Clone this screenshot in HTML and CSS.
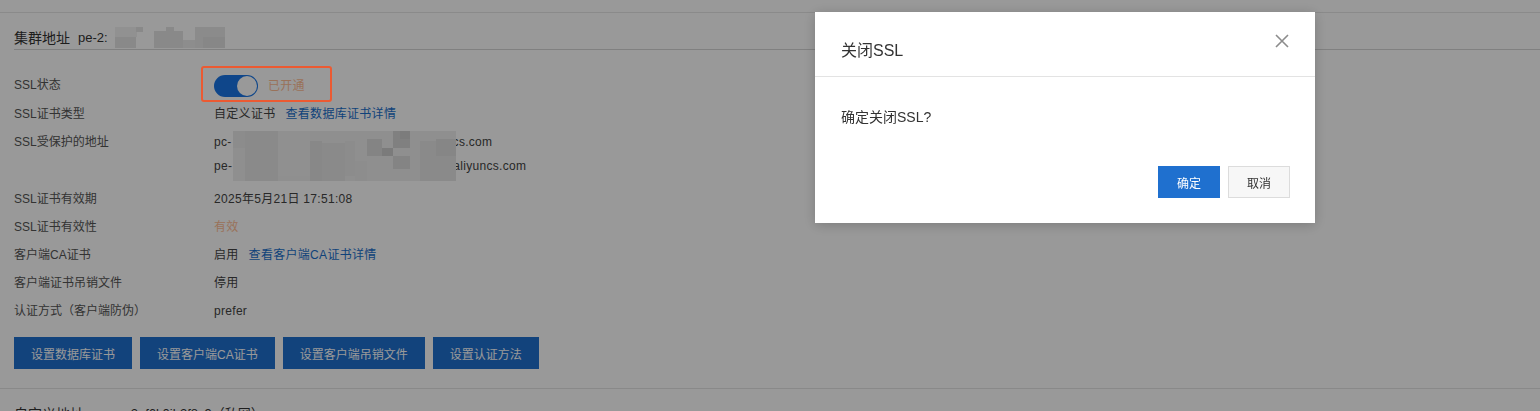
FILE: index.html
```html
<!DOCTYPE html>
<html lang="zh-CN">
<head>
  <meta charset="UTF-8" />
  <title>SSL设置</title>
  <link rel="stylesheet" href="styles.css">
</head>
<body>

  <div class="topbar"></div>

  <!-- 集群地址 -->
  <section class="cluster">
    <div class="section-head">
      <span class="section-title">集群地址</span>
      <span class="section-sub">pe-2:</span>
      <svg class="mosaic-head" width="110" height="21" viewBox="115 27 110 21">
        <rect x="115" y="27" width="22" height="10" fill="#f2f2f2"/>
        <rect x="115" y="37" width="21" height="11" fill="#e4e4e4"/>
        <rect x="136" y="27" width="7" height="5" fill="#e4e4e4"/>
        <rect x="154" y="31" width="29" height="17" fill="#e4e4e4"/>
        <rect x="166" y="27" width="8" height="5" fill="#e4e4e4"/>
        <rect x="183" y="40" width="12" height="8" fill="#ececec"/>
        <rect x="195" y="27" width="30" height="21" fill="#e8e8e8"/>
        <rect x="203" y="37" width="22" height="11" fill="#e1e1e1"/>
      </svg>
    </div>

    <div class="info">
      <div class="row row-switch">
        <div class="label">SSL状态</div>
        <div class="value">
          <span class="switch-wrap">
            <span class="switch"><i></i></span>
            <span class="warn">已开通</span>
            <span class="mark"></span>
          </span>
        </div>
      </div>
      <div class="row">
        <div class="label">SSL证书类型</div>
        <div class="value">自定义证书<a class="link">查看数据库证书详情</a></div>
      </div>
      <div class="row row-multi">
        <div class="label">SSL受保护的地址</div>
        <div class="value addr">
          <div class="line">pc-<span class="hidden-a"></span>cs.com</div>
          <div class="line">pe-<span class="hidden-b"></span>aliyuncs.com</div>
          <svg class="mosaic-addr" width="223" height="50" viewBox="233 130 223 50">
            <rect x="233" y="130" width="223" height="50" fill="#efefef"/>
            <rect x="233" y="130" width="12" height="17" fill="#eaeaea"/>
            <rect x="245" y="130" width="33" height="50" fill="#e7e7e7"/>
            <rect x="278" y="130" width="32" height="45" fill="#f1f1f1"/>
            <rect x="310" y="140" width="12" height="40" fill="#e3e3e3"/>
            <rect x="322" y="142" width="23" height="38" fill="#e7e7e7"/>
            <rect x="345" y="140" width="10" height="35" fill="#e9e9e9"/>
            <rect x="367" y="138" width="15" height="17" fill="#dcdcdc"/>
            <rect x="382" y="147" width="11" height="8" fill="#cdcdcd"/>
            <rect x="393" y="130" width="17" height="17" fill="#d6d6d6"/>
            <rect x="400" y="130" width="10" height="8" fill="#cfcfcf"/>
            <rect x="393" y="155" width="17" height="13" fill="#dcdcdc"/>
            <rect x="420" y="140" width="36" height="40" fill="#e7e7e7"/>
            <rect x="436" y="138" width="20" height="17" fill="#e0e0e0"/>
            <rect x="355" y="160" width="12" height="20" fill="#ebebeb"/>
          </svg>
        </div>
      </div>
      <div class="row">
        <div class="label">SSL证书有效期</div>
        <div class="value">2025年5月21日 17:51:08</div>
      </div>
      <div class="row">
        <div class="label">SSL证书有效性</div>
        <div class="value warn">有效</div>
      </div>
      <div class="row">
        <div class="label">客户端CA证书</div>
        <div class="value">启用<a class="link">查看客户端CA证书详情</a></div>
      </div>
      <div class="row">
        <div class="label">客户端证书吊销文件</div>
        <div class="value">停用</div>
      </div>
      <div class="row">
        <div class="label">认证方式（客户端防伪）</div>
        <div class="value">prefer</div>
      </div>
    </div>

    <div class="actions">
      <button class="btn btn-primary">设置数据库证书</button>
      <button class="btn btn-primary">设置客户端CA证书</button>
      <button class="btn btn-primary">设置客户端吊销文件</button>
      <button class="btn btn-primary">设置认证方法</button>
    </div>
  </section>

  <!-- 自定义地址 -->
  <section class="custom">
    <div class="custom-head">
      <span class="section-title">自定义地址</span>
      <span class="section-sub">pe-2uf6k0jb3f8z9（私网）</span>
    </div>
  </section>

  <!-- Mask + Dialog -->
  <div class="mask"></div>

  <div class="dialog">
    <div class="dialog-head">
      关闭SSL
      <svg class="dialog-close" width="14" height="14" viewBox="0 0 14 14">
        <path d="M1 1 L13 13 M13 1 L1 13" stroke="#8c8c8c" stroke-width="1.6" fill="none"/>
      </svg>
    </div>
    <div class="dialog-body">确定关闭SSL?</div>
    <div class="dialog-foot">
      <button class="btn btn-primary">确定</button>
      <button class="btn btn-default">取消</button>
    </div>
  </div>

</body>
</html>
```

FILE: styles.css
```css
* { margin: 0; padding: 0; box-sizing: border-box; }

html, body {
  height: 100%;
  overflow: hidden;
  background: #fff;
  font-family: "Liberation Sans", "Noto Sans CJK SC", sans-serif;
  font-size: 12px;
  color: #333;
}

.topbar {
  height: 13px;
  border-bottom: 1px solid #e6e6e6;
}

/* section */
.cluster {
  padding-left: 14px;
  padding-bottom: 19px;
  border-bottom: 1px solid #e4e4e4;
}

.section-head {
  height: 37px;
  padding-top: 14px;
  display: flex;
  align-items: center;
  border-bottom: 1px solid #d6d6d6;
}

.section-title {
  font-size: 14px;
  color: #333;
  line-height: 20px;
}

.section-sub {
  margin-left: 8px;
  font-size: 13px;
  color: #333;
  line-height: 20px;
}

.mosaic-head {
  display: block;
  margin-left: 7px;
  margin-top: -1px;
}

.info { margin-top: 21px; }

.row {
  display: flex;
  min-height: 28px;
  padding: 4px 0;
  line-height: 20px;
}

.row-switch { height: 29px; }

.row-multi { padding-bottom: 9px; }

.row:nth-child(n+5) { min-height: 27.8px; }

.label {
  width: 200px;
  flex-shrink: 0;
  color: #555;
}

.value {
  color: #444;
  letter-spacing: 0.3px;
}

.addr {
  position: relative;
  display: flex;
  flex-direction: column;
  gap: 4px;
}

.hidden-a { display: inline-block; width: 221px; }
.hidden-b { display: inline-block; width: 221px; }

.mosaic-addr {
  position: absolute;
  left: 19px;
  top: -1px;
}

.link {
  color: #1a6fcc;
  margin-left: 10px;
  cursor: pointer;
}

.warn { color: #ffbe96; }

/* switch */
.switch-wrap {
  position: relative;
  display: inline-flex;
  align-items: center;
  gap: 10px;
}

.switch {
  position: relative;
  display: inline-block;
  width: 44px;
  height: 22px;
  border-radius: 11px;
  background: #1a76e6;
}

.switch i {
  position: absolute;
  top: 1px;
  right: 1px;
  width: 20px;
  height: 20px;
  border-radius: 50%;
  background: #fff;
}

/* screenshot annotation, drawn over the mask */
.mark {
  position: absolute;
  left: -13px;
  top: -9px;
  width: 131px;
  height: 36px;
  border: 2px solid #ec5a32;
  border-radius: 3px;
  z-index: 20;
}

/* buttons */
.actions {
  display: flex;
  gap: 8px;
  margin-top: 12px;
}

.btn {
  height: 32px;
  padding: 0 16px;
  font-family: inherit;
  font-size: 12px;
  border: 1px solid transparent;
  cursor: pointer;
}

.btn-primary {
  background: #1f70cf;
  border-color: #1f70cf;
  color: #fff;
}

.btn-default {
  background: #f7f7f7;
  border-color: #dcdcdc;
  color: #333;
}

.custom { padding-left: 14px; }

.custom-head {
  display: flex;
  align-items: center;
  gap: 28px;
  padding-top: 15px;
}

.custom-head .section-sub { margin-left: 0; }

/* mask & dialog */
.mask {
  position: fixed;
  top: 0; left: 0;
  width: 100vw;
  height: 100vh;
  background: rgba(0, 0, 0, 0.4);
  z-index: 10;
}

.dialog {
  position: fixed;
  top: 12px;
  left: 815px;
  width: 500px;
  height: 211px;
  background: #fff;
  box-shadow: 0 2px 12px rgba(0, 0, 0, 0.2);
  z-index: 30;
}

.dialog-head {
  position: relative;
  height: 65px;
  padding: 29px 25px 0 26px;
  font-size: 16px;
  line-height: 20px;
  color: #333;
  border-bottom: 1px solid #e3e3e3;
}

.dialog-close {
  position: absolute;
  top: 22px;
  right: 26px;
  cursor: pointer;
}

.dialog-body {
  padding: 30px 26px 0;
  font-size: 14px;
  line-height: 20px;
  color: #333;
}

.dialog-foot {
  display: flex;
  justify-content: flex-end;
  gap: 8px;
  padding: 39px 25px 0;
}

.dialog-foot .btn {
  width: 62px;
  padding: 0;
}
```
